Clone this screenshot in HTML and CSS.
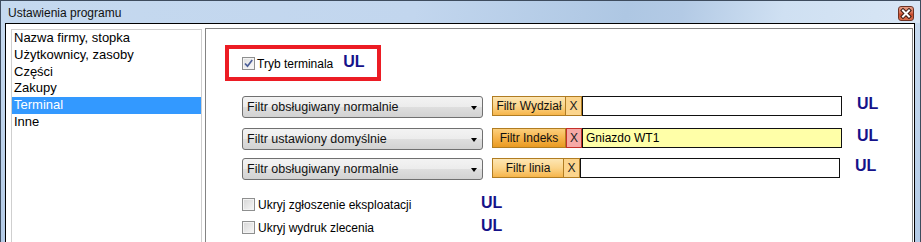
FILE: index.html
```html
<!DOCTYPE html>
<html lang="pl">
<head>
  <meta charset="UTF-8" />
  <title>Ustawienia programu</title>
  <link rel="stylesheet" href="styles.css">
</head>
<body>
  <div class="window">
    <div class="titlebar">
      <span class="title">Ustawienia programu</span>
      <span class="close">
        <svg width="14" height="13" viewBox="0 0 14 13">
          <path d="M4 3.5 L10 9.5 M10 3.5 L4 9.5" stroke="#3b1a12" stroke-width="4" stroke-linecap="square"/>
          <path d="M4 3.5 L10 9.5 M10 3.5 L4 9.5" stroke="#ffffff" stroke-width="2" stroke-linecap="square"/>
        </svg>
      </span>
    </div>

    <div class="client">
      <!-- Sections list -->
      <ul class="nav">
        <li>Nazwa firmy, stopka</li>
        <li>Użytkownicy, zasoby</li>
        <li>Części</li>
        <li>Zakupy</li>
        <li class="selected">Terminal</li>
        <li>Inne</li>
      </ul>

      <!-- Terminal settings -->
      <div class="panel">
        <div class="highlight">
          <span class="check checked">
            <svg width="11" height="11" viewBox="0 0 11 11">
              <path d="M2 5.5 L4.5 8.2 L9.2 2" fill="none" stroke="#4b5e98" stroke-width="1.7"/>
            </svg>
          </span>
          <span class="label">Tryb terminala</span>
          <span class="ul-mark">UL</span>
        </div>

        <div class="filter-row row-1">
          <div class="combo">Filtr obsługiwany normalnie<span class="arrow"></span></div>
          <div class="filter-group">
            <span class="filter-btn w74">Filtr Wydział</span>
            <span class="filter-x">X</span>
            <span class="filter-input"></span>
          </div>
          <span class="ul-mark">UL</span>
        </div>

        <div class="filter-row row-2">
          <div class="combo">Filtr ustawiony domyślnie<span class="arrow"></span></div>
          <div class="filter-group">
            <span class="filter-btn active w74">Filtr Indeks</span>
            <span class="filter-x active">X</span>
            <span class="filter-input active">Gniazdo WT1</span>
          </div>
          <span class="ul-mark">UL</span>
        </div>

        <div class="filter-row row-3">
          <div class="combo">Filtr obsługiwany normalnie<span class="arrow"></span></div>
          <div class="filter-group">
            <span class="filter-btn w72">Filtr linia</span>
            <span class="filter-x">X</span>
            <span class="filter-input"></span>
          </div>
          <span class="ul-mark">UL</span>
        </div>

        <div class="check-row first">
          <span class="check"></span>
          <span class="label">Ukryj zgłoszenie eksploatacji</span>
          <span class="ul-mark">UL</span>
        </div>
        <div class="check-row">
          <span class="check"></span>
          <span class="label">Ukryj wydruk zlecenia</span>
          <span class="ul-mark">UL</span>
        </div>
      </div>
    </div>
  </div>
</body>
</html>
```

FILE: styles.css
```css
html, body {
  margin: 0;
  padding: 0;
  overflow: hidden;
}
body {
  font-family: "Liberation Sans", Arial, sans-serif;
  color: #000;
}
.window {
  box-sizing: border-box;
  width: 921px;
  height: 242px;
  border: 1px solid #3e4c5e;
  border-bottom: none;
  padding: 0 5px 0 4px;
  display: flex;
  flex-direction: column;
  background: linear-gradient(to bottom, #c8dbf0, #b4cbe6);
}
.titlebar {
  height: 22px;
  display: flex;
  align-items: flex-start;
  justify-content: space-between;
  padding-left: 3px;
  margin: 0 -5px 0 -4px;
  padding-right: 6px;
  background: linear-gradient(100deg, #c5d9ef 0%, #c2d6ee 45%, #aec7e3 68%, #b3cae5 74%, #cfe0f2 85%, #d8e6f5 100%);
}
.title {
  font-size: 12px;
  line-height: 24px;
  margin-left: 4px;
  color: #111;
}
.close {
  box-sizing: border-box;
  width: 16px;
  height: 15px;
  margin-top: 5px;
  border: 1px solid #6e3324;
  border-radius: 3px;
  background: linear-gradient(to bottom, #e7a088 0%, #d97055 45%, #c94a2b 55%, #d8704f 100%);
  display: flex;
  align-items: center;
  justify-content: center;
}
.client {
  flex: 1;
  display: flex;
  gap: 3px;
  background: #fff;
  border: 1px solid #000;
  border-bottom: none;
  padding: 4px 1px 0 5px;
  min-height: 0;
}
.nav {
  box-sizing: border-box;
  width: 191px;
  margin: 1px 0 0 0;
  padding: 0;
  list-style: none;
  border: 1px solid #cfcfcf;
  border-bottom: none;
  font-size: 13px;
  line-height: 16.8px;
}
.nav li {
  padding-left: 2px;
  white-space: nowrap;
}
.nav .selected {
  background: #3399ff;
  color: #fff;
}
.panel {
  flex: 1;
  border: 1px solid #848484;
  border-bottom: none;
  padding: 16px 0 0 36px;
  font-size: 12px;
}
.highlight {
  box-sizing: border-box;
  width: 156px;
  height: 36px;
  margin-left: -17px;
  padding: 1px 0 0 13px;
  border: 4px solid #ec1c24;
  display: flex;
  align-items: center;
}
.highlight .label {
  margin-left: 2px;
}
.highlight .ul-mark {
  margin-left: 10px;
  margin-bottom: 3px;
}
.check {
  box-sizing: border-box;
  width: 13px;
  height: 13px;
  flex: none;
  border: 1px solid #8e8f8f;
  background: linear-gradient(135deg, #d6d6d6, #f7f7f7);
  box-shadow: inset 0 0 0 1px #f3f3f3;
  display: flex;
  align-items: center;
  justify-content: center;
}
.check.checked {
  background: linear-gradient(135deg, #dedede, #fafafa);
}
.ul-mark {
  font-size: 16px;
  font-weight: bold;
  line-height: 16px;
  color: #15128a;
}
.filter-row {
  display: flex;
  align-items: flex-start;
}
.row-1 { margin-top: 15px; }
.row-2 { margin-top: 10px; }
.row-3 { margin-top: 8px; }
.combo {
  box-sizing: border-box;
  position: relative;
  width: 241px;
  height: 22px;
  border: 1px solid #707070;
  border-radius: 3px;
  background: linear-gradient(to bottom, #f3f3f3 0%, #ececec 50%, #dedede 51%, #d2d2d2 100%);
  padding-left: 4px;
  font-size: 12.5px;
  line-height: 20px;
  color: #111;
}
.arrow {
  position: absolute;
  right: 5px;
  top: 9px;
  border-left: 3.5px solid transparent;
  border-right: 3.5px solid transparent;
  border-top: 4px solid #000;
}
.filter-group {
  display: flex;
  height: 20px;
  margin-left: 9px;
}
.filter-btn {
  box-sizing: border-box;
  border: 1px solid #b07c22;
  background: linear-gradient(to bottom, #fde6b3 0%, #fbd48a 50%, #f6b54a 100%);
  text-align: center;
  line-height: 18px;
  color: #111;
}
.filter-btn.active {
  background: linear-gradient(to bottom, #fccf7c 0%, #f6b44c 50%, #e99a22 100%);
}
.w74 { width: 74px; }
.w72 { width: 72px; }
.filter-x {
  box-sizing: border-box;
  width: 16px;
  border: 1px solid #b07c22;
  border-left: none;
  background: #fcd58d;
  text-align: center;
  line-height: 18px;
  color: #222;
}
.filter-x.active {
  border: 1px solid #c4302a;
  background: #f6a9a6;
}
.filter-input {
  box-sizing: border-box;
  width: 260px;
  border: 1px solid #111;
  background: #fff;
  padding-left: 3px;
  line-height: 18px;
}
.filter-input.active {
  background: #ffffa8;
}
.filter-row > .ul-mark {
  margin-left: 15px;
}
.check-row {
  display: flex;
  align-items: center;
  height: 23px;
}
.check-row.first {
  margin-top: 13px;
}
.check-row .label {
  width: 223px;
  margin-left: 3px;
}
.check-row .ul-mark {
  margin-bottom: 3px;
}
```
